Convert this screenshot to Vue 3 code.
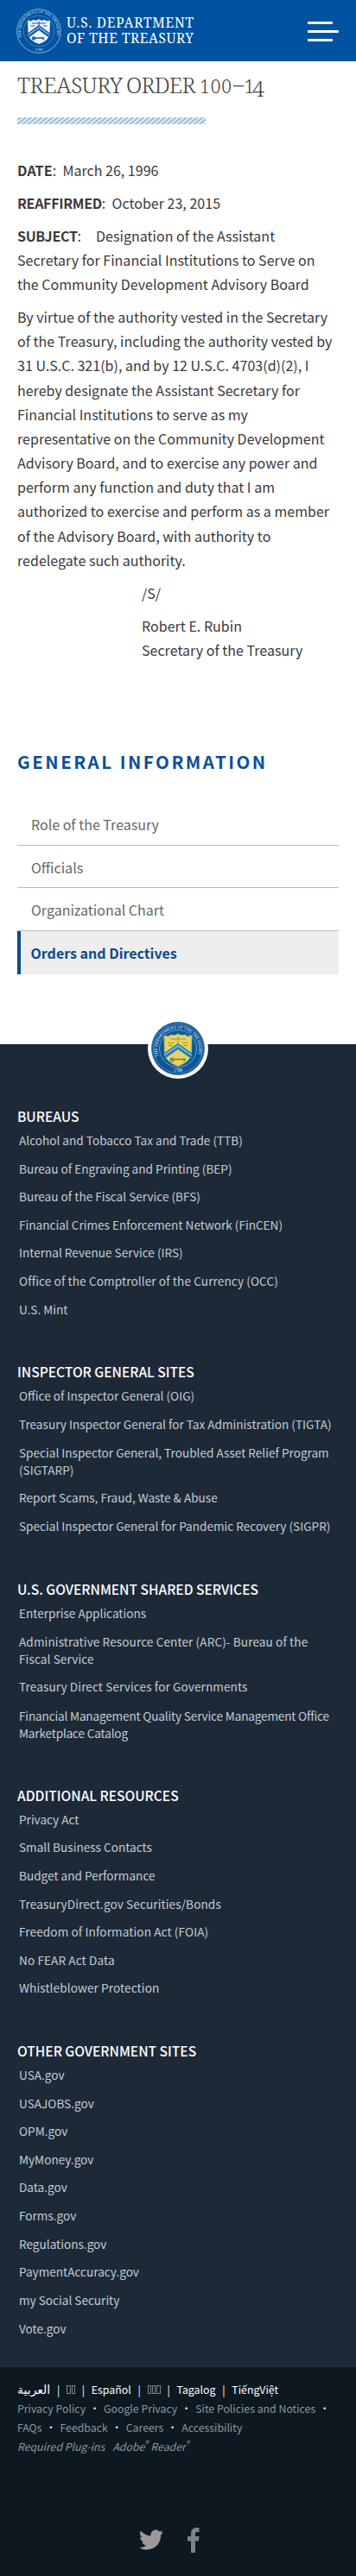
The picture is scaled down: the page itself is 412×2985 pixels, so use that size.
<script setup>
const body = [
  'By virtue of the authority vested in the Secretary',
  'of the Treasury, including the authority vested by',
  '31 U.S.C. 321(b), and by 12 U.S.C. 4703(d)(2), I',
  'hereby designate the Assistant Secretary for',
  'Financial Institutions to serve as my',
  'representative on the Community Development',
  'Advisory Board, and to exercise any power and',
  'perform any function and duty that I am',
  'authorized to exercise and perform as a member',
  'of the Advisory Board, with authority to',
  'redelegate such authority.',
]
const menu = ['Role of the Treasury', 'Officials', 'Organizational Chart', 'Orders and Directives']
const groups = [
  { title: 'BUREAUS', items: [
    { lines: ['Alcohol and Tobacco Tax and Trade (TTB)'] },
    { lines: ['Bureau of Engraving and Printing (BEP)'] },
    { lines: ['Bureau of the Fiscal Service (BFS)'] },
    { lines: ['Financial Crimes Enforcement Network (FinCEN)'] },
    { lines: ['Internal Revenue Service (IRS)'] },
    { lines: ['Office of the Comptroller of the Currency (OCC)'], track: 'wide' },
    { lines: ['U.S. Mint'] },
  ] },
  { title: 'INSPECTOR GENERAL SITES', items: [
    { lines: ['Office of Inspector General (OIG)'] },
    { lines: ['Treasury Inspector General for Tax Administration (TIGTA)'] },
    { lines: ['Special Inspector General, Troubled Asset Relief Program', '(SIGTARP)'] },
    { lines: ['Report Scams, Fraud, Waste & Abuse'] },
    { lines: ['Special Inspector General for Pandemic Recovery (SIGPR)'] },
  ] },
  { title: 'U.S. GOVERNMENT SHARED SERVICES', items: [
    { lines: ['Enterprise Applications'] },
    { lines: ['Administrative Resource Center (ARC)- Bureau of the', 'Fiscal Service'], track: 'wide' },
    { lines: ['Treasury Direct Services for Governments'], track: 'wide' },
    { lines: ['Financial Management Quality Service Management Office', 'Marketplace Catalog'], track: 'tight' },
  ] },
  { title: 'ADDITIONAL RESOURCES', items: [
    { lines: ['Privacy Act'] },
    { lines: ['Small Business Contacts'] },
    { lines: ['Budget and Performance'] },
    { lines: ['TreasuryDirect.gov Securities/Bonds'], track: 'wide' },
    { lines: ['Freedom of Information Act (FOIA)'], track: 'wide' },
    { lines: ['No FEAR Act Data'], track: 'wide' },
    { lines: ['Whistleblower Protection'], track: 'wide' },
  ] },
  { title: 'OTHER GOVERNMENT SITES', items: [
    { lines: ['USA.gov'] },
    { lines: ['USAJOBS.gov'] },
    { lines: ['OPM.gov'] },
    { lines: ['MyMoney.gov'] },
    { lines: ['Data.gov'] },
    { lines: ['Forms.gov'] },
    { lines: ['Regulations.gov'] },
    { lines: ['PaymentAccuracy.gov'] },
    { lines: ['my Social Security'] },
    { lines: ['Vote.gov'] },
  ] },
]
</script>

<template>
  <div class="page">
    <header class="bar">
      <svg class="seal" viewBox="0 0 52 52" width="52" height="52">
        <defs><path id="arcTop" d="M6.2 33 A21 21 0 1 1 45.8 33" /></defs>
        <circle cx="26" cy="26" r="25.3" fill="none" stroke="#8fbce4" stroke-width=".9" />
        <circle cx="26" cy="26" r="17.8" fill="none" stroke="#7fb0dc" stroke-width=".5" />
        <text class="ring" fill="#dcecf8"><textPath href="#arcTop" textLength="78">THE DEPARTMENT OF THE TREASURY</textPath></text>
        <text class="ring" x="26" y="49" text-anchor="middle" fill="#dcecf8">1789</text>
        <path d="M13 13.5 Q17 15.5 19.5 12.8 Q23 15 26 12 Q29 15 32.5 12.8 Q35 15.5 39 13.5 L38.5 29 Q38 37 26 41 Q14 37 13.5 29 Z" fill="#e9f4fd" />
        <path d="M13 28.5 L26 19 L39 28.5 V34.5 L26 25 L13 34.5 Z" fill="#1458a4" />
        <path d="M13.3 30.8 L26 21.6 L38.7 30.8" fill="none" stroke="#e9f4fd" stroke-width=".9" />
        <path d="M18 17 H34 M26 14.5 V20 M16.5 20 H21 M31 20 H35.5" stroke="#1458a4" stroke-width="1" fill="none" />
        <path d="M19 34 H32 M20 36 a1.6 1.6 0 1 1 .1 0 M31 34 v2.5" stroke="#1458a4" stroke-width="1.3" fill="none" />
      </svg>
      <svg class="brand" width="150" height="71" viewBox="0 0 150 71">
        <text x="0" y="32" textLength="147">U.S. DEPARTMENT</text>
        <text x="0" y="50" textLength="147">OF THE TREASURY</text>
      </svg>
      <div class="burger"><i></i><i></i><i></i></div>
    </header>

    <main>
      <h1>
        <svg width="300" height="50" viewBox="0 0 300 50">
          <text x="0" y="37" textLength="122">TREASURY</text>
          <text x="126" y="37" textLength="80.5">ORDER</text>
          <text class="osf" x="211" y="37" textLength="37">100</text>
          <text x="250" y="36" textLength="12" lengthAdjust="spacingAndGlyphs">–</text>
          <text class="osf" x="262.5" y="37">1</text>
          <text class="osf tall" x="272" y="41">4</text>
        </svg>
      </h1>
      <svg class="stripe" width="218" height="8">
        <defs>
          <pattern id="hatch" width="6.2" height="8" patternUnits="userSpaceOnUse">
            <rect width="6.2" height="8" fill="#dcebf6" />
            <path d="M-6.2 8 L4 0 M0 8 L10.2 0 M-12.4 8 L-2.2 0" stroke="#86add0" stroke-width="1.3" />
          </pattern>
        </defs>
        <rect width="218" height="8" fill="url(#hatch)" />
      </svg>
      <p><b class="loose">DATE</b>:&nbsp; March 26, 1996</p>
      <p><b>REAFFIRMED</b>:&nbsp; October 23, 2015</p>
      <p><b>SUBJECT</b>:<span class="tab"></span>Designation of the Assistant<br />Secretary for Financial Institutions to Serve on<br />the Community Development Advisory Board</p>
      <p><template v-for="l in body" :key="l">{{ l }}<br /></template></p>
      <p class="sign">/S/</p>
      <p class="sign">Robert E. Rubin<br />Secretary of the Treasury</p>

      <h2>GENERAL INFORMATION</h2>
      <ul class="menu">
        <li v-for="(m, i) in menu" :key="m" :class="{ active: i === 3 }">{{ m }}</li>
      </ul>
    </main>

    <footer>
      <div class="badge">
        <svg viewBox="0 0 62 62" width="62" height="62">
          <defs><path id="arcTop2" d="M8.5 40 A24 24 0 1 1 53.5 40" /></defs>
          <circle cx="31" cy="31" r="30.5" fill="#0f5497" stroke="#3d7ab5" stroke-width="1" />
          <circle cx="31" cy="31" r="28.5" fill="none" stroke="#7fb0d8" stroke-width=".5" />
          <circle cx="31" cy="31" r="21.5" fill="#0b5a99" stroke="#8fc0de" stroke-width=".7" />
          <text class="ring2" fill="#e4f3fb"><textPath href="#arcTop2" textLength="90">THE DEPARTMENT OF THE TREASURY</textPath></text>
          <text class="ring2" x="31" y="58" text-anchor="middle" fill="#e4f3fb">1789</text>
          <path d="M15 16 Q20 18.5 23 15 Q27 17 31 14 Q35 17 39 15 Q42 18.5 47 16 L46.5 36 Q46 46 31 51.5 Q16 46 15.5 36 Z" fill="#e9d35c" stroke="#b9c878" stroke-width=".6" />
          <path d="M15.3 36 L31 25 L46.7 36 V43 L31 32 L15.3 43 Z" fill="#2a78b8" />
          <path d="M15.3 38.7 L31 27.8 L46.7 38.7" fill="none" stroke="#8ccbe6" stroke-width="1.4" />
          <path d="M22 20 H40 M31 17 V25 M19 24.5 H26 M36 24.5 H43 M20 27.5 H25 M37 27.5 H42" stroke="#8a9a52" stroke-width="1" fill="none" />
          <path d="M22 43.5 H40 M24 46 a1.8 1.8 0 1 1 .1 0 M38 43.5 v3" stroke="#5d8070" stroke-width="1.5" fill="none" />
        </svg>
      </div>
      <section v-for="g in groups" :key="g.title">
        <h3>{{ g.title }}</h3>
        <ul>
          <li v-for="it in g.items" :key="it.lines[0]" :class="[it.track, { two: it.lines.length > 1 }]"><template v-for="(l, i) in it.lines" :key="l"><br v-if="i" />{{ l }}</template></li>
        </ul>
      </section>
    </footer>

    <div class="legal">
      <div class="langs">
        <span class="ar" dir="rtl">العربية</span><em>|</em><span class="boxes"><i></i><i></i></span><em>|</em><span>Español</span><em>|</em><span class="boxes"><i></i><i></i><i></i></span><em>|</em><span>Tagalog</span><em>|</em><span>TiếngViệt</span>
      </div>
      <div class="row"><span>Privacy Policy</span><b>•</b><span>Google Privacy</span><b>•</b><span>Site Policies and Notices</span><b>•</b></div>
      <div class="row"><span>FAQs</span><b>•</b><span>Feedback</span><b>•</b><span>Careers</span><b>•</b><span>Accessibility</span></div>
      <div class="row plug"><span>Required Plug-ins</span><span>Adobe<sup>®</sup> Reader<sup>®</sup></span></div>
      <div class="social">
        <svg width="28" height="26" viewBox="0 0 28 26"><path fill="#9d9b9a" d="M28 3.400c-1 .5-2 .8-3.200.9 1.200-.7 2-1.800 2.400-3.100-1.100.6-2.300 1.100-3.600 1.400C22.500 1.300 21 .6 19.300.6c-3.200 0-5.800 2.600-5.800 5.700 0 .5.100.9.200 1.300C8.900 7.300 4.700 5.100 1.900 1.700c-.5.8-.8 1.800-.8 2.900 0 2 1 3.700 2.600 4.800-.9 0-1.800-.3-2.600-.7v.1c0 2.800 2 5.100 4.600 5.600-.5.100-1 .2-1.500.2-.4 0-.7 0-1.100-.1.700 2.300 2.900 3.900 5.400 4-2 1.500-4.500 2.500-7.100 2.500-.5 0-.9 0-1.400-.1 2.500 1.600 5.600 2.600 8.800 2.600 10.600 0 16.300-8.700 16.300-16.200v-.7C26.200 5.700 27.200 4.600 28 3.400z" /></svg>
        <svg width="14" height="29" viewBox="0 0 14 29"><path fill="#7c8388" d="M4 29V15.500H0V10h4V7C4 2.500 6.500 0 10.500 0H13.500V5H11C9.500 5 9 5.700 9 7v3h4.500l-.6 5.500H9V29z" /></svg>
      </div>
    </div>
  </div>
</template>

<style>
body { background: #fff; }
</style>

<style scoped>
.page { width: 412px; height: 2985px; overflow: hidden; display: flex; flex-direction: column; font-family: "Noto Sans CJK SC", "Noto Sans", sans-serif; color: #3a3a3a; background: #fff; white-space: nowrap; }
ul { list-style: none; margin: 0; padding: 0; }
.bar { height: 71px; flex: none; box-sizing: border-box; background: #0053a0; display: flex; align-items: center; padding: 0 20px 0 19px; }
.seal { display: block; margin-top: 1px; }
.seal, .badge svg { overflow: visible; }
.ring { font: 4.4px "Liberation Serif", serif; }
.ring2 { font: 5.2px "Liberation Serif", serif; }
.brand { display: block; margin-left: 6px; }
.brand text { font: 400 15.5px "Noto Serif", "DejaVu Serif Condensed", serif; fill: #fff; }
.burger { margin-left: auto; width: 36px; display: flex; flex-direction: column; gap: 7px; margin-top: 2px; }
.burger i { height: 3px; width: 29px; background: #fff; border-radius: 1px; }
.burger i:nth-child(2) { width: 36px; }
main { height: 1139px; flex: none; padding: 0 20px; box-sizing: border-box; }
h1 { margin: 0; height: 65px; }
h1 svg { display: block; }
h1 text { font: 300 25.5px "Noto Serif", "DejaVu Serif", serif; fill: #444; }
h1 .osf { font-size: 21px; }
h1 .tall { font-size: 25px; }
.stripe { display: block; margin-bottom: 39px; }
p { margin: 0 0 9.8px; font-size: 16px; line-height: 28.16px; letter-spacing: .02px; }
p b { font-weight: 700; letter-spacing: -.3px; }
p b.loose { letter-spacing: .15px; }
.tab { display: inline-block; width: 17px; }
.sign { padding-left: 144px; }
h2 { margin: 100px 0 0; font-size: 20.5px; line-height: 30px; letter-spacing: 2.5px; font-weight: 700; color: #0b4f99; }
.menu { margin-top: 33px; }
.menu li { box-sizing: border-box; height: 49.7px; padding-left: 16px; font-size: 16px; line-height: 50px; color: #666; border-bottom: 1px solid #bbb; }
.menu li.active { background: #eee; border-left: 4px solid #0b4a8f; border-bottom: 0; padding-left: 11.5px; font-weight: 700; color: #0b4a8f; }
footer { position: relative; height: 1533px; flex: none; box-sizing: border-box; background: #1e2938; padding: 71px 20px 0; }
.badge { position: absolute; left: 171px; top: -30px; width: 70px; height: 70px; border-radius: 50%; background: #fff; display: flex; justify-content: center; }
.badge svg { margin-top: 4px; }
h3 { margin: 0; font-size: 15.55px; line-height: 24px; font-weight: 500; color: #fff; }
section { margin-bottom: 49.9px; }
section li { margin: 0 0 13px 2px; font-size: 13.6px; line-height: 19.63px; color: #c4ccd2; }
section li.two { line-height: 20px; margin-bottom: 13.2px; }
section li.wide { letter-spacing: .1px; }
section li.tight { letter-spacing: -.17px; }
section ul { padding-top: 6.9px; }
.legal { flex: 1; background: #0d1820; padding: 15px 20px 0; font-size: 12.3px; }
.langs, .row { display: flex; height: 22px; line-height: 22px; align-items: center; }
.langs { color: #fff; }
.langs em { font-style: normal; width: 19px; text-align: center; }
.ar { font-family: "DejaVu Sans", sans-serif; font-size: 14px; }
.boxes { display: flex; gap: 1px; }
.boxes i { width: 4.3px; height: 10px; border: 1px solid #7f868b; box-sizing: border-box; }
.row { color: #8e979d; }
.row b { color: #dde2e5; font-weight: 400; width: 21px; text-align: center; }
.plug { font-style: italic; gap: 9px; }
.plug sup { font-size: 9px; line-height: 0; }
.social { display: flex; gap: 28px; margin: 83px 0 0 141px; align-items: center; }
</style>
